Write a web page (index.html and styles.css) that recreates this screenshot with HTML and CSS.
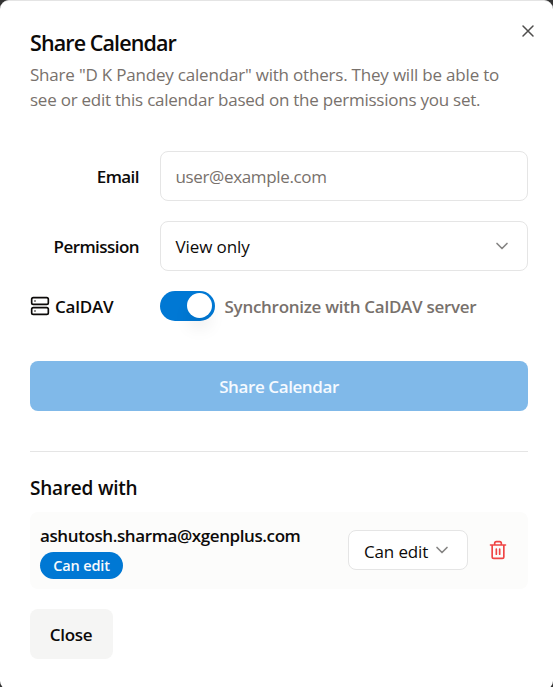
FILE: index.html
```html
<!DOCTYPE html>
<html lang="en">
<head>
<meta charset="utf-8">
<title>Share Calendar</title>
<link rel="stylesheet" href="styles.css">
</head>
<body>
<main class="dialog">
  <button class="dismiss" aria-label="Close dialog">
    <svg viewBox="0 0 24 24" width="20" height="20"><path d="M18 6 6 18M6 6l12 12"/></svg>
  </button>
  <header class="header">
    <h1 class="title">Share Calendar</h1>
    <p class="desc"><span class="line-one">Share "D K Pandey calendar" with others. They will be able to</span><br><span class="line-two">see or edit this calendar based on the permissions you set.</span></p>
  </header>
  <div class="form">
    <div class="row"><label class="label label-email" for="email">Email</label><input class="field" id="email" placeholder="user@example.com"></div>
    <div class="row"><span class="label label-permission">Permission</span>
      <div class="field select"><span class="view-only">View only</span><svg class="chevron" viewBox="0 0 24 24" width="20" height="20"><path d="m6 9 6 6 6-6"/></svg></div></div>
    <div class="row"><span class="label caldav"><svg viewBox="0 0 24 24" width="20" height="20"><rect x="2" y="2" width="20" height="8" rx="2"/><rect x="2" y="14" width="20" height="8" rx="2"/><path d="M6 6h.01M6 18h.01"/></svg><span>CalDAV</span></span>
      <div class="sync"><span class="switch"><span class="thumb"></span></span><span class="sync-text">Synchronize with CalDAV server</span></div></div>
  </div>
  <button class="share"><span>Share Calendar</span></button>
  <section class="shared">
    <h2 class="subtitle">Shared with</h2>
    <div class="person">
      <div class="identity"><div class="address">ashutosh.sharma@xgenplus.com</div><span class="badge">Can edit</span></div>
      <div class="role"><span class="role-text">Can edit</span><svg class="chevron" viewBox="0 0 24 24" width="20" height="20"><path d="m6 9 6 6 6-6"/></svg></div>
      <button class="remove" aria-label="Remove"><svg viewBox="0 0 24 24" width="20" height="20"><path d="M3 6h18M19 6v14a2 2 0 0 1-2 2H7a2 2 0 0 1-2-2V6M8 6V4a2 2 0 0 1 2-2h4a2 2 0 0 1 2 2v2M10 11v6M14 11v6"/></svg></button>
    </div>
  </section>
  <button class="close">Close</button>
</main>
</body>
</html>
```
FILE: styles.css
```css
* { box-sizing: border-box; }
body { margin: 0; background: #333; font-family: "Open Sans", "Noto Sans", sans-serif; font-size: 17px; line-height: 25px; color: #0c0a09; white-space: nowrap; }
button, input { font: inherit; color: inherit; border: 0; margin: 0; padding: 0; background: none; }
svg { display: block; flex: none; fill: none; stroke: currentColor; stroke-width: 2; stroke-linecap: round; stroke-linejoin: round; }
.dialog { position: relative; height: 690px; padding: 29px 25px 0 30px; background: #fff; border-top: 1px solid #e4e4e4; border-radius: 9px; }
.dismiss { position: absolute; top: 20px; right: 15px; color: #4f4e4d; }
.dismiss svg { stroke-width: 1.8; }
.title { margin: 0 0 7px; font-size: 21.5px; line-height: 25px; font-weight: 600; letter-spacing: -.9px; }
.desc { margin: 0; color: #78716c; }
.line-one { letter-spacing: -.2px; }
.line-two { letter-spacing: -.24px; }
.form { display: grid; gap: 20px; margin-top: 39px; }
.row { display: grid; grid-template-columns: 110px 368px; gap: 20px; align-items: center; }
.label { padding-right: 1px; text-align: right; font-weight: 600; letter-spacing: -.55px; }
.caldav { display: flex; align-items: center; gap: 5px; letter-spacing: -.2px; }
.field { width: 368px; height: 50px; padding: 0 15px 0 14.5px; border: 1px solid #e5e5e5; border-radius: 8px; background: #fff; letter-spacing: -.35px; outline: 0; }
.field::placeholder { color: #78716c; opacity: 1; }
.select { display: flex; align-items: center; justify-content: space-between; }
.view-only { letter-spacing: -.1px; }
.chevron { color: #858483; }
.sync { display: flex; align-items: center; gap: 9.5px; }
.switch { display: flex; justify-content: flex-end; width: 55px; height: 30px; padding: 2px 3px; border-radius: 15px; background: #0078d4; }
.thumb { width: 25px; height: 25px; border-radius: 50%; background: #fff; box-shadow: 0 12px 18px -3px rgba(0,0,0,.1); }
.sync-text { color: #78716c; font-weight: 600; letter-spacing: -.28px; }
.share { display: block; width: 498px; height: 50px; margin-top: 40px; border-radius: 8px; background: #80b9e9; color: #f5faff; font-weight: 600; letter-spacing: -.4px; }
.shared { width: 498px; margin-top: 40px; padding-top: 24px; border-top: 1px solid #e5e5e5; }
.subtitle { margin: 0 0 11px; font-size: 19px; line-height: 25px; font-weight: 600; letter-spacing: -.22px; }
.person { display: flex; align-items: center; height: 77px; padding: 0 20px 1px 10px; background: #fcfcfb; border-radius: 8px; }
.identity { flex: 1; }
.address { font-weight: 600; letter-spacing: -.4px; line-height: 26px; margin-top: 1px; }
.badge { display: flex; align-items: center; justify-content: center; width: 83px; height: 27px; margin-top: 3px; border-radius: 14px; background: #0078d4; color: #f8fafc; font-size: 14.5px; font-weight: 600; letter-spacing: -.15px; }
.role { display: flex; align-items: center; gap: 4px; width: 120px; height: 40px; padding: 0 15px; margin-right: 20px; border: 1px solid #e5e5e5; border-radius: 8px; background: #fff; }
.role-text { letter-spacing: -.15px; padding-top: 2px; }
.remove { color: #ef4444; }
.close { width: 83px; height: 50px; margin-top: 20px; padding-right: 1px; border-radius: 8px; background: #f5f5f4; font-weight: 600; letter-spacing: -.3px; }
```
